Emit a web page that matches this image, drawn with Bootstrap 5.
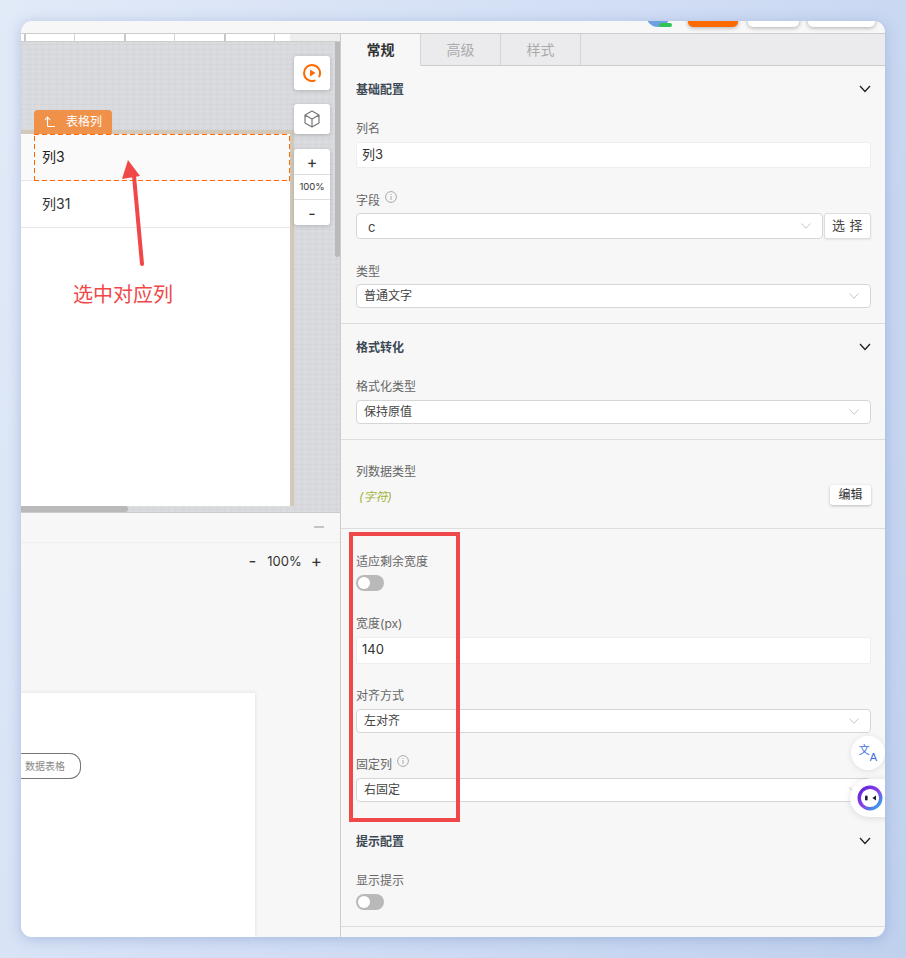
<!DOCTYPE html>
<html lang="zh-CN">
<head>
<meta charset="UTF-8">
<meta name="viewport" content="width=device-width, initial-scale=1.0">
<title>表格列配置</title>
<link href="https://cdn.jsdelivr.net/npm/bootstrap@5.3.0/dist/css/bootstrap.min.css" rel="stylesheet">
<style>
html,body{height:958px;overflow:hidden}
body{background:linear-gradient(110deg,#e2eaf8 0%,#d3dff5 45%,#c0d1ee 100%);font-family:"Inter","Noto Sans CJK SC",sans-serif;font-size:12px;color:#333}
.win{margin:21px 0 0 21px;width:864px;height:916px;border-radius:11px;background:#f7f7f7;overflow:hidden;position:relative;box-shadow:0 2px 14px rgba(90,120,180,.35)}

/* top strip, its buttons are cut off by the window edge */
.topbar{height:13px;border-bottom:1px solid #ccc;padding:0 10px 6px 0;gap:10px;overflow:hidden;flex:none}
.top-btn{height:30px;border-radius:0 0 5px 5px;background:#fff;box-shadow:0 1px 4px rgba(0,0,0,.3);flex:none}
.top-orange{background:#ff6a00;width:50px}
.avatar{width:24px;height:24px;border-radius:50%;background:#6e9fe0;margin-right:8px;position:relative;flex:none}
.avatar-tag{position:absolute;right:-2px;bottom:0;width:13px;height:4px;border-radius:2px;background:#2fc455}

.left-pane{width:320px;border-right:1px solid #ccc;flex:none}
.ruler{height:8px;background:#eee;border-bottom:1px solid #ccc;flex:none}
.ruler-white{width:269px;background:#fff;height:7px}
.tick{width:50px;height:7px;border-left:1px solid #d4d4d4;flex:none}
.tick-dark{border-left:2px solid #c8c8c8}
.tick-first{width:3px;border:0}
.tick-end{width:16px}
.canvas-area{height:470px;position:relative;flex:none;overflow:hidden;background-color:#d9dade;background-image:repeating-linear-gradient(0deg,rgba(255,255,255,.05) 0 1px,transparent 1px 2px,rgba(120,120,130,.035) 2px 3px,transparent 3px 5px),repeating-linear-gradient(90deg,rgba(120,120,130,.035) 0 1px,transparent 1px 4px,rgba(255,255,255,.05) 4px 5px,transparent 5px 7px)}
.sheet{position:absolute;left:0;top:88px;width:273px;height:376px;background:#fff;border-top:4px solid #d3c9b9;border-right:4px solid #d3c9b9}
.sheet-row{height:47px;line-height:46px;padding-left:21px;font-size:14px;color:#333;border-bottom:1px solid #e8e8e8}
.sheet-row-on{background:#fafafa;color:#222}
.picked{position:absolute;left:13px;top:92px;width:256px;height:47px;background-image:repeating-linear-gradient(90deg,#ff6a00 0 5px,transparent 5px 8px),repeating-linear-gradient(90deg,#ff6a00 0 5px,transparent 5px 8px),repeating-linear-gradient(0deg,#ff6a00 0 5px,transparent 5px 8px),repeating-linear-gradient(0deg,#ff6a00 0 5px,transparent 5px 8px);background-size:100% 1px,100% 1px,1px 100%,1px 100%;background-position:0 0,0 100%,0 0,100% 0;background-repeat:no-repeat}
.picked-tag{position:absolute;left:13px;top:68px;width:78px;height:24px;background:#f0914a;color:#fff;border-radius:4px 4px 0 0;gap:10px;padding-left:10px;font-size:12px}
.pointer{position:absolute;left:0;top:0;width:319px;height:470px;pointer-events:none}
.note-red{position:absolute;left:52px;top:239px;font-size:20px;line-height:28px;color:#f04848}
.tools{position:absolute;left:273px;top:14px;width:36px;gap:14px}
.tool-box{background:#fff;border-radius:3px;box-shadow:0 1px 4px rgba(0,0,0,.18);color:#333}
.tool-box-stack{margin-top:1px}
.tool-row{height:25px;border-bottom:1px solid #ddd;font-size:16px}
.tool-row:first-child{height:26px}
.tool-row:last-child{border-bottom:0}
.tool-pct{font-size:9.5px}
.bar-v{position:absolute;left:314px;top:0;width:5px;height:215px;background:#b9b9b9;border-radius:0 0 3px 3px}
.bar-h{position:absolute;left:0;bottom:0;width:107px;height:6px;background:#b9b9b9;border-radius:0 3px 3px 0}

.flow-head{height:31px;border-top:1px solid #ccc;border-bottom:1px solid #eee;padding:0 16px 2px 0;flex:none}
.dash{width:10px;height:2px;background:#c4c4c4}
.zoom-row{height:37px;padding-right:18px;gap:9px;font-size:13px;color:#333;flex:none}
.zoom-sign{font-size:17px;line-height:1}
.zoom-minus{margin-right:2px}
.paper{margin-top:113px;width:234px;flex:1;background:#fff;box-shadow:0 0 4px rgba(0,0,0,.1);padding-top:60px}
.flow-node{width:60px;height:26px;border:1px solid #777;border-left:0;border-radius:0 11px 11px 0;font-size:10px;line-height:24px;color:#888;padding-left:4px;white-space:nowrap}

/* property panel */
.prop-pane{flex:1;min-width:0}
.tabs-row{height:32px;background:#ebebed;border-bottom:1px solid #ccc;flex:none}
.prop-tab{width:80px;height:32px;border-right:1px solid #d4d4d4;font-size:14px;color:#aaa;background:transparent;border-left:0;border-top:0;border-bottom:1px solid #ccc;padding:0}
.prop-tab-on{background:#f7f7f7;border-bottom-color:#f7f7f7;color:#333;font-weight:700}
.prop-sec{padding:0 14px 0 15px;border-bottom:1px solid #ddd}
.sec-head{height:46px;font-size:12px;font-weight:700;color:#3d4a55}
.sec-title{padding-top:2px}
.fld-label{height:20px;line-height:18px;padding-top:2px;margin-bottom:4px;color:#666;font-size:12px;gap:5px}
.fld-tight{margin-bottom:3px}
.fld{margin-bottom:22px}
.fld-last{margin-bottom:15px}
.fld-mid{margin-bottom:21px}
.info-mark{margin-top:-8px}
.form-control.prop-input{height:26px;padding:0 5px 3px;border:1px solid #eee;border-radius:2px;font-size:13px;color:#333;background:#fff;box-shadow:none}
.prop-num{height:27px !important}
.form-select.prop-select{height:24px;padding:0 24px 0 7px;border:1px solid #d6d6d6;border-radius:4px;font-size:12px;line-height:22px;color:#444;background-color:#fff;background-size:10px 6px;background-position:right 11px center;background-image:url("data:image/svg+xml,%3Csvg xmlns='http://www.w3.org/2000/svg' viewBox='0 0 10 6'%3E%3Cpath d='M.5.5L5 5.3 9.5.5' fill='none' stroke='%23c4c4c4'/%3E%3C/svg%3E");box-shadow:none}
.form-select.field-select{height:26px;padding:1px 24px 0 11px;font-size:13px;border-radius:4px}
.pick-btn{width:47px;height:26px;margin-left:1px;padding:0;font-size:13px;letter-spacing:.5px;color:#444;background:#fff;border:1px solid #ddd;border-radius:3px;box-shadow:0 1px 2px rgba(0,0,0,.08);flex:none}
.type-row{height:20px;margin-bottom:23px}
.type-val{font-style:italic;color:#9db53a;font-size:12px;padding:3px 0 0 3px}
.edit-btn{width:41px;height:20px;padding:0;font-size:12px;color:#333;background:#fff;border:0;border-radius:3px;box-shadow:0 1px 3px rgba(0,0,0,.25)}
.form-check.prop-switch{padding:0;margin:0;min-height:0;height:16px;line-height:0}
.form-check.prop-switch .form-check-input{width:28px;height:16px;margin:0;float:none;border:0;background-color:#b9b9b9;background-position:left 2px center;background-size:12px 12px;background-image:url("data:image/svg+xml,%3Csvg xmlns='http://www.w3.org/2000/svg' viewBox='0 0 12 12'%3E%3Ccircle cx='6' cy='6' r='6' fill='%23fff'/%3E%3C/svg%3E");box-shadow:none}
.sec-gap{height:6px}
.sec-plain{padding-top:21px}
.sec-width{padding-top:22px;border-bottom:0}
.sec-tip{padding-bottom:16px}
.fld-pin{margin-bottom:16px}
.btn-w51{width:51px}
.btn-w67{width:67px;margin-left:-1px}

.red-frame{position:absolute;left:328px;top:511px;width:111px;height:290px;border:4px solid #f04848;pointer-events:none}
.float-tr{position:absolute;left:830px;top:715px;width:34px;height:34px;border-radius:50%;background:#fff;box-shadow:0 1px 6px rgba(0,0,0,.1);color:#3b6fe0}
.tr-a{font-size:11px;line-height:11px;margin-top:8px;font-family:"Liberation Sans",sans-serif}
.tr-zh{font-size:11px;line-height:11px;margin-top:-5px}
.float-ai{position:absolute;left:829px;top:758px;width:40px;height:38px;border-radius:19px 0 0 19px;background:#fff;box-shadow:0 1px 7px rgba(0,0,0,.12);padding-left:7px}
</style>
</head>
<body>
<div class="win d-flex flex-column">
  <div class="topbar d-flex justify-content-end align-items-end">
    <div class="avatar"><span class="avatar-tag"></span></div>
    <div class="top-btn top-orange"></div>
    <div class="top-btn btn-w51"></div>
    <div class="top-btn btn-w67"></div>
  </div>

  <div class="d-flex flex-grow-1" style="min-height:0">
    <div class="left-pane d-flex flex-column">
      <div class="ruler">
        <div class="ruler-white d-flex">
          <div class="tick tick-first"></div>
          <div class="tick tick-dark"></div><div class="tick"></div><div class="tick tick-dark"></div><div class="tick"></div><div class="tick tick-dark"></div><div class="tick tick-end"></div>
        </div>
      </div>
      <div class="canvas-area">
        <div class="sheet">
          <div class="sheet-row sheet-row-on">列3</div>
          <div class="sheet-row">列31</div>
        </div>
        <div class="picked"></div>
        <div class="picked-tag d-flex align-items-center">
          <svg width="12" height="12" viewBox="0 0 12 12" fill="none" stroke="#fff" stroke-width="1.1"><path d="M1 4l2.5-3L6 4M3.5 1.5V9.5q0 1 1 1H11"/></svg>
          <span>表格列</span>
        </div>
        <svg class="pointer" viewBox="0 0 319 470">
          <path d="M121 222L113 134" stroke="#f04848" stroke-width="4" stroke-linecap="round" fill="none"/>
          <path d="M107 118L101 137L119 134Z" fill="#f04848"/>
        </svg>
        <div class="note-red">选中对应列</div>
        <div class="tools d-flex flex-column">
          <div class="tool-box d-flex align-items-center justify-content-center" style="height:34px">
            <svg width="20" height="20" viewBox="0 0 20 20" fill="none"><path d="M12.6 17.6A8 8 0 1 1 17.3 13.4" stroke="#ff6a00" stroke-width="2" stroke-linecap="round"/><path d="M8 6.5l5.5 3.5L8 13.5z" fill="#ff6a00"/></svg>
          </div>
          <div class="tool-box d-flex align-items-center justify-content-center" style="height:30px">
            <svg width="18" height="18" viewBox="0 0 18 18" fill="none" stroke="#777" stroke-width="1.2" stroke-linejoin="round"><path d="M9 1l7 4v8l-7 4-7-4V5zM2 5l7 4 7-4M9 9v8"/></svg>
          </div>
          <div class="tool-box tool-box-stack d-flex flex-column">
            <div class="tool-row d-flex align-items-center justify-content-center">+</div>
            <div class="tool-row tool-pct d-flex align-items-center justify-content-center">100%</div>
            <div class="tool-row d-flex align-items-center justify-content-center">-</div>
          </div>
        </div>
        <div class="bar-v"></div>
        <div class="bar-h"></div>
      </div>
      <div class="flow-head d-flex align-items-center justify-content-end"><div class="dash"></div></div>
      <div class="zoom-row d-flex align-items-center justify-content-end">
        <span class="zoom-sign zoom-minus">-</span><span>100%</span><span class="zoom-sign">+</span>
      </div>
      <div class="paper">
        <div class="flow-node">数据表格</div>
      </div>
    </div>

    <div class="prop-pane d-flex flex-column">
      <div class="tabs-row d-flex">
        <button type="button" class="prop-tab prop-tab-on">常规</button>
        <button type="button" class="prop-tab">高级</button>
        <button type="button" class="prop-tab">样式</button>
      </div>

      <div class="prop-sec">
        <div class="sec-head d-flex align-items-center justify-content-between">
          <span class="sec-title">基础配置</span>
          <svg width="12" height="8" viewBox="0 0 12 8" fill="none" stroke="#222" stroke-width="1.3"><path d="M1 1l5 5.5L11 1"/></svg>
        </div>
        <div class="sec-gap"></div>
        <div class="fld">
          <div class="fld-label">列名</div>
          <input class="form-control prop-input" type="text" value="列3">
        </div>
        <div class="fld">
          <div class="fld-label fld-tight d-flex align-items-center">字段
            <svg class="info-mark" width="12" height="12" viewBox="0 0 12 12" fill="none" stroke="#aaa"><circle cx="6" cy="6" r="5.4"/><path d="M6 5v4M6 3v1"/></svg>
          </div>
          <div class="d-flex">
            <select class="form-select prop-select field-select"><option>c</option></select>
            <button type="button" class="btn pick-btn">选 择</button>
          </div>
        </div>
        <div class="fld-last">
          <div class="fld-label fld-tight">类型</div>
          <select class="form-select prop-select"><option>普通文字</option></select>
        </div>
      </div>

      <div class="prop-sec">
        <div class="sec-head d-flex align-items-center justify-content-between">
          <span class="sec-title">格式转化</span>
          <svg width="12" height="8" viewBox="0 0 12 8" fill="none" stroke="#222" stroke-width="1.3"><path d="M1 1l5 5.5L11 1"/></svg>
        </div>
        <div class="sec-gap"></div>
        <div class="fld-last">
          <div class="fld-label">格式化类型</div>
          <select class="form-select prop-select"><option>保持原值</option></select>
        </div>
      </div>

      <div class="prop-sec sec-plain">
        <div class="fld-label">列数据类型</div>
        <div class="type-row d-flex align-items-center justify-content-between">
          <span class="type-val">(字符)</span>
          <button type="button" class="btn edit-btn">编辑</button>
        </div>
      </div>

      <div class="prop-sec sec-width">
        <div class="fld">
          <div class="fld-label">适应剩余宽度</div>
          <div class="form-check form-switch prop-switch"><input class="form-check-input" type="checkbox" role="switch"></div>
        </div>
        <div class="fld-mid">
          <div class="fld-label">宽度(px)</div>
          <input class="form-control prop-input prop-num" type="text" value="140">
        </div>
        <div class="fld-mid">
          <div class="fld-label">对齐方式</div>
          <select class="form-select prop-select"><option>左对齐</option></select>
        </div>
        <div class="fld-pin">
          <div class="fld-label d-flex align-items-center">固定列
            <svg class="info-mark" width="12" height="12" viewBox="0 0 12 12" fill="none" stroke="#aaa"><circle cx="6" cy="6" r="5.4"/><path d="M6 5v4M6 3v1"/></svg>
          </div>
          <select class="form-select prop-select"><option>右固定</option></select>
        </div>
      </div>

      <div class="prop-sec sec-tip">
        <div class="sec-head d-flex align-items-center justify-content-between">
          <span class="sec-title">提示配置</span>
          <svg width="12" height="8" viewBox="0 0 12 8" fill="none" stroke="#222" stroke-width="1.3"><path d="M1 1l5 5.5L11 1"/></svg>
        </div>
        <div class="sec-gap"></div>
        <div class="fld-label">显示提示</div>
        <div class="form-check form-switch prop-switch"><input class="form-check-input" type="checkbox" role="switch"></div>
      </div>
    </div>
  </div>

  <div class="red-frame"></div>
  <div class="float-tr d-flex align-items-center justify-content-center">
    <span class="tr-zh">文</span><span class="tr-a">A</span>
  </div>
  <div class="float-ai d-flex align-items-center">
    <svg width="26" height="26" viewBox="0 0 26 26" fill="none">
      <defs><linearGradient id="aiRing" x1="0" y1="0" x2="1" y2="1"><stop offset="0" stop-color="#5a22d8"/><stop offset=".5" stop-color="#8a3fe8"/><stop offset="1" stop-color="#25b4e8"/></linearGradient></defs>
      <circle cx="13" cy="13" r="10.8" stroke="url(#aiRing)" stroke-width="3.4"/>
      <rect x="8" y="10.5" width="2.6" height="5" rx="1.2" fill="#1c1c2a"/>
      <path d="M19 10.5l-3.6 2.5 3.6 2.5z" fill="#1c1c2a"/>
    </svg>
  </div>
</div>
</body>
</html>
